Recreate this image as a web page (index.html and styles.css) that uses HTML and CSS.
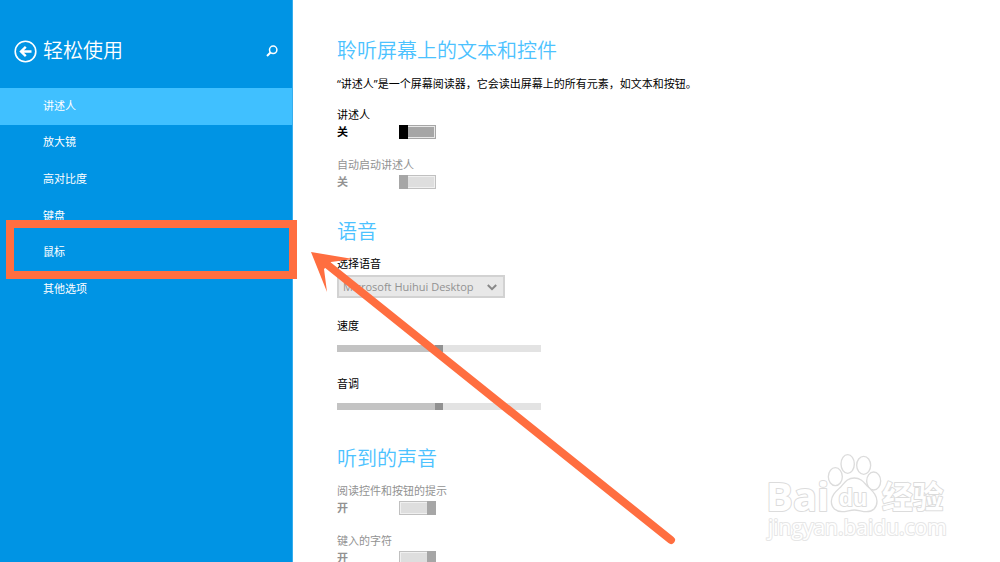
FILE: index.html
```
<!DOCTYPE html>
<html lang="zh-CN">
<head>
<meta charset="UTF-8">
<meta name="viewport" content="width=device-width, initial-scale=1.0">
<title>轻松使用</title>
<link rel="stylesheet" href="styles.css">
</head>
<body>

<div class="layout">
    <aside class="sidebar">
        <div class="sidebar-header">
            <button class="icon-btn" aria-label="返回">
                <svg width="23" height="23" viewBox="0 0 23 23" fill="none" stroke="#fff">
                    <circle cx="11.5" cy="11.5" r="10.3" stroke-width="1.6"/>
                    <path d="M17.5 11.5H7M11.8 6.8L7 11.5L11.8 16.2" stroke-width="2.4"/>
                </svg>
            </button>
            <h1>轻松使用</h1>
            <button class="icon-btn" aria-label="搜索">
                <svg width="12" height="12" viewBox="0 0 12 12" fill="none" stroke="#fff">
                    <circle cx="7.2" cy="4.8" r="3.7" stroke-width="1.5"/>
                    <path d="M4.5 7.5L1 11" stroke-width="2"/>
                </svg>
            </button>
        </div>
        <nav class="menu">
            <a class="active" href="#narrator">讲述人</a>
            <a href="#magnifier">放大镜</a>
            <a href="#contrast">高对比度</a>
            <a href="#keyboard">键盘</a>
            <a href="#mouse">鼠标</a>
            <a href="#other">其他选项</a>
        </nav>
    </aside>

    <main class="content">
        <section>
            <h2>聆听屏幕上的文本和控件</h2>
            <p class="desc">“讲述人”是一个屏幕阅读器，它会读出屏幕上的所有元素，如文本和按钮。</p>
            <div class="toggle">
                <label for="narrator">讲述人</label>
                <div class="toggle-row"><b>关</b><input type="checkbox" id="narrator"></div>
            </div>
            <div class="toggle disabled">
                <label for="autostart">自动启动讲述人</label>
                <div class="toggle-row"><b>关</b><input type="checkbox" id="autostart" disabled></div>
            </div>
        </section>

        <section class="voice">
            <h2>语音</h2>
            <label for="voz">选择语音</label>
            <div class="select-box">
                <select id="voz" disabled>
                    <option>Microsoft Huihui Desktop</option>
                </select>
                <svg width="10" height="7" viewBox="0 0 10 7" fill="none" stroke="#888" stroke-width="2">
                    <path d="M0.8 1L5 5.2L9.2 1"/>
                </svg>
            </div>
            <div class="slider">
                <label for="speed">速度</label>
                <input type="range" id="speed" min="0" max="100" value="50" disabled>
            </div>
            <div class="slider">
                <label for="pitch">音调</label>
                <input type="range" id="pitch" min="0" max="100" value="50" disabled>
            </div>
        </section>

        <section class="sounds">
            <h2>听到的声音</h2>
            <div class="toggle disabled">
                <label for="hints">阅读控件和按钮的提示</label>
                <div class="toggle-row"><b>开</b><input type="checkbox" id="hints" checked disabled></div>
            </div>
            <div class="toggle disabled">
                <label for="chars">键入的字符</label>
                <div class="toggle-row"><b>开</b><input type="checkbox" id="chars" checked disabled></div>
            </div>
        </section>
    </main>
</div>

<!-- Watermark -->
<svg class="watermark" width="220" height="115" viewBox="0 0 660 345">
    <text class="wm-logo" x="48" y="212">Bai</text>
    <ellipse cx="256" cy="110" rx="21" ry="27"/>
    <ellipse cx="293" cy="72" rx="20" ry="28"/>
    <ellipse cx="341" cy="76" rx="21" ry="27"/>
    <ellipse cx="371" cy="123" rx="21" ry="27"/>
    <path d="M313 114C290 114 283 130 272 141C258 154 244 165 244 184C244 204 258 215 276 215C290 215 300 210 313 210C326 210 336 215 350 215C368 215 381 204 381 184C381 165 368 154 355 141C343 130 336 114 313 114Z"/>
    <text class="wm-du" x="266" y="198">du</text>
    <text class="wm-cn" x="396" y="203">经验</text>
    <text class="wm-url" x="54" y="284">jingyan.baidu.com</text>
</svg>

<!-- Marker box and arrow -->
<div class="marker"></div>
<svg class="arrow" width="370" height="300" viewBox="0 0 370 300">
    <path d="M14 10L361 288" stroke="#ff6e40" stroke-width="8" stroke-linecap="round"/>
    <path d="M1 0L43 7L21 10L14 17L17 40Z" fill="#ff6e40"/>
</svg>

</body>
</html>
```
FILE: styles.css
```
* { box-sizing: border-box; }
body { margin: 0; background: #fff; color: #000; overflow: hidden;
       font-family: "Open Sans", "Noto Sans CJK SC", sans-serif; font-size: 11px; line-height: 17px; }
h1, h2 { margin: 0; font-size: 20px; line-height: 30px; font-weight: 350; }
h2 { color: #4cc2ff; }
label { display: block; }

.layout { display: flex; height: 100vh; }

.sidebar { flex: 0 0 293px; background: #0094e4; color: #fff; border-right: 1px solid #35aeee; }
.sidebar-header { display: flex; align-items: center; height: 88px; padding: 14px 14px 0; }
.sidebar-header h1 { flex: 1; margin-left: 6px; }
.icon-btn { display: flex; padding: 0; border: none; background: none; }
.menu { display: grid; grid-template-rows: repeat(6, 1fr); height: 220px; }
.menu a { display: flex; align-items: center; padding: 0 43px 2px; color: #fff; text-decoration: none; }
.menu a.active { background: #40c0ff; }

.content { flex: 1; padding: 36px 44px 0; overflow: hidden; }
.desc { margin: 9px 0 14px; }

.toggle + .toggle { margin-top: 16px; }
.toggle-row { display: flex; align-items: center; }
.toggle-row b { width: 62px; }
.toggle.disabled { color: #929292; }
.toggle input { appearance: none; display: flex; width: 37px; height: 14px; margin: 0;
                border: 1px solid #a6a6a6; background: #a6a6a6; box-shadow: inset 0 0 0 1px #e8e8e8; }
.toggle input::before { content: ""; width: 9px; height: 14px; margin: -1px; background: #000; }
.toggle input:checked { justify-content: flex-end; }
.toggle input:disabled { border-color: #c0c0c0; background: #dedede; box-shadow: inset 0 0 0 1px #f0f0f0; }
.toggle input:disabled::before { background: #a6a6a6; }

.voice { margin-top: 27px; }
.voice h2, .sounds h2 { margin-bottom: 8px; }
.select-box { position: relative; width: 168px; margin-top: 3px; }
.select-box select { appearance: none; display: block; width: 100%; height: 23px; padding: 0 4px; border: 2px solid #d2d2d2;
                     border-radius: 0; background: #e8e8e8; color: #929292; opacity: 1; font-family: inherit; font-size: 11px; }
.select-box svg { position: absolute; right: 8px; top: 9px; }

.slider { margin-top: 19px; }
.slider + .slider { margin-top: 23px; }
.slider input { appearance: none; display: block; width: 204px; height: 7px; margin: 11px 0 0;
                background: linear-gradient(to right, #c3c3c3 50%, #e3e3e3 50%); }
.slider input::-webkit-slider-thumb { appearance: none; width: 8px; height: 7px; background: #919191; }

.sounds { margin-top: 34px; }

.watermark { position: absolute; right: 30px; bottom: 7px; fill: #fff; stroke: #dcdcdc; stroke-width: 4px; }
.watermark text { paint-order: stroke; stroke-width: 6px; stroke-linejoin: round; font-family: "Open Sans", "Noto Sans CJK SC", sans-serif; }
.watermark .wm-logo { font-size: 120px; font-weight: 700; }
.watermark .wm-du { font-size: 70px; font-weight: 700; font-family: "Liberation Sans", sans-serif; }
.watermark .wm-cn { font-size: 92px; font-weight: 700; }
.watermark .wm-url { font-size: 63px; stroke: #e6e6e6; }

.marker { position: absolute; left: 6px; top: 220px; width: 291px; height: 59px; border: 8px solid #ff6e40; }
.arrow { position: absolute; left: 310px; top: 252px; overflow: visible; pointer-events: none; }
```
